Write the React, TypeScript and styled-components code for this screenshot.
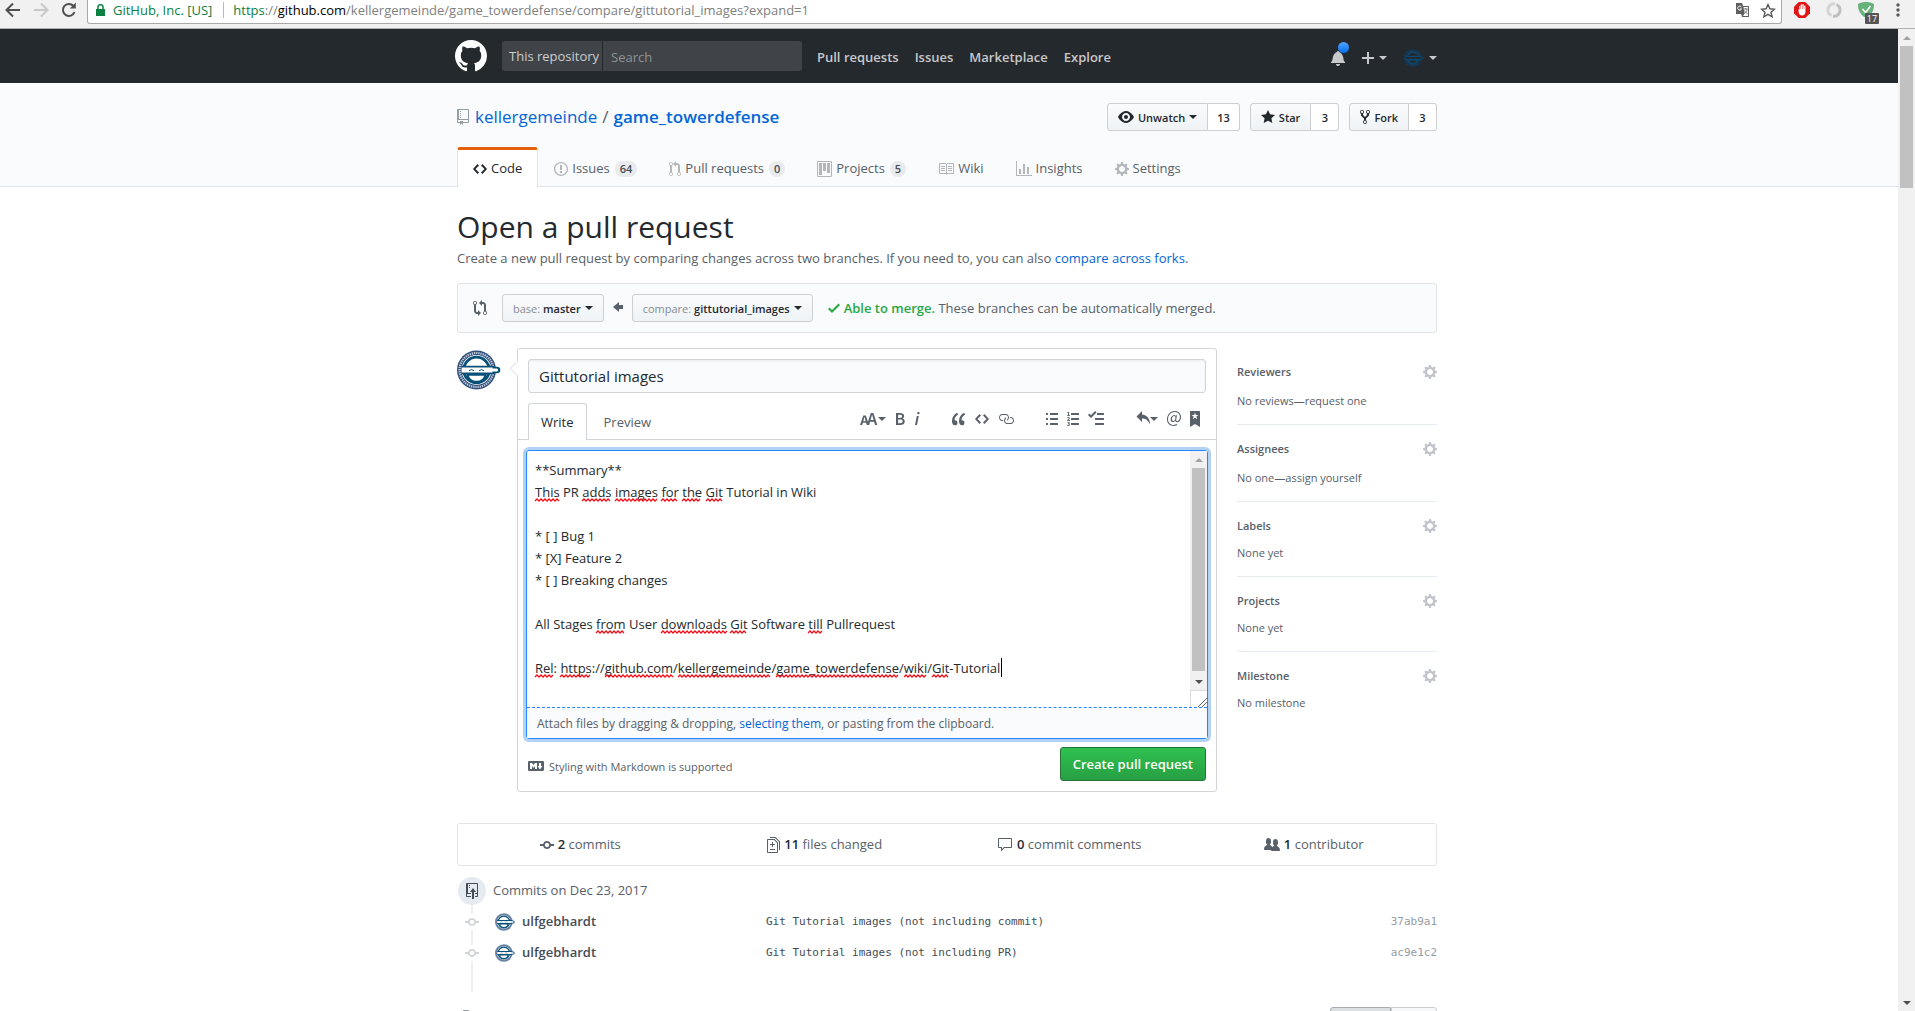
import React, { useLayoutEffect, useRef, useState } from "react";
import styled, { createGlobalStyle, css } from "styled-components";

const sans = `"Open Sans", "Noto Sans", sans-serif`;
const mono = `"DejaVu Sans Mono", "Liberation Mono", monospace`;

const color = {
  text: "#24292e",
  muted: "#586069",
  faint: "#959da5",
  link: "#0366d6",
  line: "#e1e4e8",
  field: "#d1d5da",
  wash: "#fafbfc",
};

const GlobalStyle = createGlobalStyle`
  *, *::before, *::after { box-sizing: border-box; }
  html, body { margin: 0; background: #fff; overflow: hidden; }
  body { font: 13px/21px ${sans}; color: ${color.text}; }
  button, input, textarea { font: inherit; color: inherit; margin: 0; }
  button { cursor: pointer; }
  a { color: ${color.link}; text-decoration: none; }
  h1, h2, h3, p, ul, ol { margin: 0; padding: 0; font-size: inherit; font-weight: 400; }
  ul, ol { list-style: none; }
  svg { display: block; flex: none; }
`;

/* ---------- icons ---------- */

const paths = {
  mark: [16, "M8 0C3.58 0 0 3.58 0 8c0 3.54 2.29 6.53 5.47 7.59.4.07.55-.17.55-.38 0-.19-.01-.82-.01-1.49-2.01.37-2.53-.49-2.69-.94-.09-.23-.48-.94-.82-1.13-.28-.15-.68-.52-.01-.53.63-.01 1.08.58 1.23.82.72 1.21 1.87.87 2.33.66.07-.52.28-.87.51-1.07-1.78-.2-3.64-.89-3.64-3.95 0-.87.31-1.59.82-2.15-.08-.2-.36-1.02.08-2.12 0 0 .67-.21 2.2.82.64-.18 1.32-.27 2-.27.68 0 1.36.09 2 .27 1.53-1.04 2.2-.82 2.2-.82.44 1.1.16 1.92.08 2.12.51.56.82 1.27.82 2.15 0 3.07-1.87 3.75-3.65 3.95.29.25.54.73.54 1.48 0 1.07-.01 1.93-.01 2.2 0 .21.15.46.55.38A8.013 8.013 0 0 0 16 8c0-4.42-3.58-8-8-8z"],
  repo: [12, "M4 9H3V8h1v1zm0-3H3v1h1V6zm0-2H3v1h1V4zm0-2H3v1h1V2zm8-1v12c0 .55-.45 1-1 1H6v2l-1.5-1.5L3 16v-2H1c-.55 0-1-.45-1-1V1c0-.55.45-1 1-1h10c.55 0 1 .45 1 1zm-1 10H1v2h2v-1h3v1h5v-2zm0-10H2v9h9V1z"],
  code: [14, "M9.5 3L8 4.5 11.5 8 8 11.5 9.5 13 14 8 9.5 3zm-5 0L0 8l4.5 5L6 11.5 2.5 8 6 4.5 4.5 3z"],
  issue: [14, "M7 2.3c3.14 0 5.7 2.56 5.7 5.7s-2.56 5.7-5.7 5.7A5.71 5.71 0 0 1 1.3 8c0-3.14 2.56-5.7 5.7-5.7zM7 1C3.14 1 0 4.14 0 8s3.14 7 7 7 7-3.14 7-7-3.14-7-7-7zm1 3H6v5h2V4zm0 6H6v2h2v-2z"],
  pull: [12, "M11 11.28V5c-.03-.78-.34-1.47-.94-2.06C9.46 2.35 8.78 2.03 8 2H7V0L4 3l3 3V4h1c.27.02.48.11.69.31.21.2.3.42.31.69v6.28A1.993 1.993 0 0 0 10 15a1.993 1.993 0 0 0 1-3.72zm-1 2.92c-.66 0-1.2-.55-1.2-1.2 0-.65.55-1.2 1.2-1.2.65 0 1.2.55 1.2 1.2 0 .65-.55 1.2-1.2 1.2zM4 3c0-1.11-.89-2-2-2a1.993 1.993 0 0 0-1 3.72v6.56A1.993 1.993 0 0 0 2 15a1.993 1.993 0 0 0 1-3.72V4.72c.59-.34 1-.98 1-1.72zm-.8 10c0 .66-.55 1.2-1.2 1.2-.65 0-1.2-.55-1.2-1.2 0-.65.55-1.2 1.2-1.2.65 0 1.2.55 1.2 1.2zM2 4.2C1.34 4.2.8 3.65.8 3c0-.65.55-1.2 1.2-1.2.65 0 1.2.55 1.2 1.2 0 .65-.55 1.2-1.2 1.2z"],
  project: [15, "M10 12h3V2h-3v10zm-4-2h3V2H6v8zm-4 4h3V2H2v12zm-1 1h13V1H1v14zM14 0H1a1 1 0 0 0-1 1v14a1 1 0 0 0 1 1h13a1 1 0 0 0 1-1V1a1 1 0 0 0-1-1z"],
  book: [16, "M3 5h4v1H3V5zm0 3h4V7H3v1zm0 2h4V9H3v1zm11-5h-4v1h4V5zm0 2h-4v1h4V7zm0 2h-4v1h4V9zm2-6v9c0 .55-.45 1-1 1H9.5l-1 1-1-1H2c-.55 0-1-.45-1-1V3c0-.55.45-1 1-1h5.5l1 1 1-1H15c.55 0 1 .45 1 1zm-8 .5L7.5 3H2v9h6V3.5zm7-.5H9.5l-.5.5V12h6V3z"],
  graph: [16, "M16 14v1H0V0h1v14h15zM5 13H3V8h2v5zm4 0H7V3h2v10zm4 0h-2V6h2v7z"],
  gear: [14, "M14 8.77v-1.6l-1.94-.64-.45-1.09.88-1.84-1.13-1.13-1.81.91-1.09-.45-.69-1.92h-1.6l-.63 1.94-1.11.45-1.84-.88-1.13 1.13.91 1.81-.45 1.09L0 7.23v1.59l1.94.64.45 1.09-.88 1.84 1.13 1.13 1.81-.91 1.09.45.69 1.92h1.59l.63-1.94 1.11-.45 1.84.88 1.13-1.13-.92-1.81.47-1.09L14 8.75v.02zM7 11c-1.66 0-3-1.34-3-3s1.34-3 3-3 3 1.34 3 3-1.34 3-3 3z"],
  eye: [16, "M8.06 2C3 2 0 8 0 8s3 6 8.06 6C13 14 16 8 16 8s-3-6-7.94-6zM8 12c-2.2 0-4-1.78-4-4 0-2.2 1.8-4 4-4 2.22 0 4 1.8 4 4 0 2.22-1.78 4-4 4zm2-4c0 1.11-.89 2-2 2-1.11 0-2-.89-2-2 0-1.11.89-2 2-2 1.11 0 2 .89 2 2z"],
  star: [14, "M14 6l-4.9-.64L7 1 4.9 5.36 0 6l3.6 3.26L2.67 14 7 11.67 11.33 14l-.93-4.74z"],
  fork: [10, "M8 1a1.993 1.993 0 0 0-1 3.72V6L5 8 3 6V4.72A1.993 1.993 0 0 0 2 1a1.993 1.993 0 0 0-1 3.72V6.5l3 3v1.78A1.993 1.993 0 0 0 5 15a1.993 1.993 0 0 0 1-3.72V9.5l3-3V4.72A1.993 1.993 0 0 0 8 1zM2 4.2C1.34 4.2.8 3.65.8 3c0-.65.55-1.2 1.2-1.2.65 0 1.2.55 1.2 1.2 0 .65-.55 1.2-1.2 1.2zm3 10c-.66 0-1.2-.55-1.2-1.2 0-.65.55-1.2 1.2-1.2.65 0 1.2.55 1.2 1.2 0 .65-.55 1.2-1.2 1.2zm3-10c-.66 0-1.2-.55-1.2-1.2 0-.65.55-1.2 1.2-1.2.65 0 1.2.55 1.2 1.2 0 .65-.55 1.2-1.2 1.2z"],
  compare: [14, "M5 12H4c-.27-.02-.48-.11-.69-.31-.21-.2-.3-.42-.31-.69V4.72A1.993 1.993 0 0 0 2 1a1.993 1.993 0 0 0-1 3.72V11c.03.78.34 1.47.94 2.06.6.59 1.28.91 2.06.94h1v2l3-3-3-3v2zM2 1.8c.66 0 1.2.55 1.2 1.2 0 .65-.55 1.2-1.2 1.2C1.35 4.2.8 3.65.8 3c0-.65.55-1.2 1.2-1.2zm11 9.48V5c-.03-.78-.34-1.47-.94-2.06-.6-.59-1.28-.91-2.06-.94H9V0L6 3l3 3V4h1c.27.02.48.11.69.31.21.2.3.42.31.69v6.28A1.993 1.993 0 0 0 12 15a1.993 1.993 0 0 0 1-3.72zm-1 2.92c-.66 0-1.2-.55-1.2-1.2 0-.65.55-1.2 1.2-1.2.65 0 1.2.55 1.2 1.2 0 .65-.55 1.2-1.2 1.2z"],
  arrow: [10, "M6 3L0 8l6 5v-3h4V6H6z"],
  check: [12, "M12 5l-8 8-4-4 1.5-1.5L4 10l6.5-6.5z"],
  bell: [14, "M14 12v1H0v-1l.73-.58c.77-.77.81-2.55 1.19-4.42C2.69 3.23 6 2 6 2c0-.55.45-1 1-1s1 .45 1 1c0 0 3.39 1.23 4.16 5 .38 1.88.42 3.66 1.19 4.42l.66.58H14zm-7 4c1.11 0 2-.89 2-2H5c0 1.11.89 2 2 2z"],
  plus: [12, "M12 9H7v5H5V9H0V7h5V2h2v5h5z"],
  textSize: [18, "M13.62 9.08L12.1 3.66h-.06l-1.5 5.42h3.08zM5.7 10.13S4.68 6.52 4.53 6.02h-.08l-1.13 4.11H5.7zM17.31 14h-2.25l-.95-3.25h-4.07L9.09 14H6.84l-.69-2.33H2.87L2.17 14H0l3.3-9.59h2.5l2.17 6.34L10.86 2h2.52l3.94 12h-.01z"],
  bold: [10, "M1 2h3.83c2.48 0 4.3.75 4.3 2.95 0 1.14-.63 2.23-1.67 2.61v.06c1.33.3 2.3 1.23 2.3 2.86 0 2.39-1.97 3.52-4.61 3.52H1V2zm3.66 4.95c1.67 0 2.38-.66 2.38-1.69 0-1.17-.78-1.61-2.34-1.61H3.13v3.3h1.53zm.27 5.39c1.77 0 2.75-.64 2.75-1.98 0-1.27-.95-1.81-2.75-1.81h-1.8v3.8h1.8v-.01z"],
  italic: [6, "M2.81 5h1.98L3 14H1l1.81-9zm.36-2.7c0-.7.58-1.3 1.33-1.3.56 0 1.13.38 1.13 1.03 0 .75-.59 1.3-1.33 1.3-.58 0-1.13-.38-1.13-1.03z"],
  quote: [14, "M6.16 3.5C3.73 5.06 2.55 6.67 2.55 9.36c.16-.05.3-.05.44-.05 1.27 0 2.5.86 2.5 2.41 0 1.61-1.03 2.61-2.5 2.61-1.9 0-2.99-1.52-2.99-4.25 0-3.8 1.75-6.53 5.02-8.42L6.16 3.5zm7 0c-2.43 1.56-3.61 3.17-3.61 5.86.16-.05.3-.05.44-.05 1.27 0 2.5.86 2.5 2.41 0 1.61-1.03 2.61-2.5 2.61-1.89 0-2.98-1.52-2.98-4.25 0-3.8 1.75-6.53 5.02-8.42l1.14 1.84h-.01z"],
  link: [16, "M4 9h1v1H4c-1.5 0-3-1.69-3-3.5S2.55 3 4 3h4c1.45 0 3 1.69 3 3.5 0 1.41-.91 2.72-2 3.25V8.59c.58-.45 1-1.27 1-2.09C10 5.22 8.98 4 8 4H4c-.98 0-2 1.22-2 2.5S3 9 4 9zm9-3h-1v1h1c1 0 2 1.22 2 2.5S13.98 12 13 12H9c-.98 0-2-1.22-2-2.5 0-.83.42-1.64 1-2.09V6.25c-1.09.53-2 1.84-2 3.25C6 11.31 7.55 13 9 13h4c1.45 0 3-1.69 3-3.5S14.5 6 13 6z"],
  bullets: [12, "M2 13c0 .59 0 1-.59 1H.59C0 14 0 13.59 0 13c0-.59 0-1 .59-1h.81c.59 0 .59.41.59 1H2zm2.59-9h6.81c.59 0 .59-.41.59-1 0-.59 0-1-.59-1H4.59C4 2 4 2.41 4 3c0 .59 0 1 .59 1zM1.41 7H.59C0 7 0 7.41 0 8c0 .59 0 1 .59 1h.81c.59 0 .59-.41.59-1 0-.59 0-1-.59-1h.01zm0-5H.59C0 2 0 2.41 0 3c0 .59 0 1 .59 1h.81c.59 0 .59-.41.59-1 0-.59 0-1-.59-1h.01zm10 5H4.59C4 7 4 7.41 4 8c0 .59 0 1 .59 1h6.81c.59 0 .59-.41.59-1 0-.59 0-1-.59-1h.01zm0 5H4.59C4 12 4 12.41 4 13c0 .59 0 1 .59 1h6.81c.59 0 .59-.41.59-1 0-.59 0-1-.59-1h.01z"],
  numbers: [12, "M12 13c0 .59 0 1-.59 1H4.59C4 14 4 13.59 4 13c0-.59 0-1 .59-1h6.81c.59 0 .59.41.59 1H12zM4.59 4h6.81c.59 0 .59-.41.59-1 0-.59 0-1-.59-1H4.59C4 2 4 2.41 4 3c0 .59 0 1 .59 1zm6.81 3H4.59C4 7 4 7.41 4 8c0 .59 0 1 .59 1h6.81c.59 0 .59-.41.59-1 0-.59 0-1-.59-1zM2 1h-.72c-.3.19-.58.25-1.03.34V2H1v2.14H.16V5H3v-.86H2V1zm.25 8.13c-.17 0-.45.03-.66.06.53-.56 1.14-1.25 1.14-1.89C2.72 6.52 2.17 6 1.38 6c-.59 0-.97.2-1.38.64l.58.58c.19-.19.38-.38.64-.38.28 0 .48.16.48.52 0 .53-.77 1.2-1.7 2.06V10h3v-.88h-.75v.01zm-.08 3.78v-.03c.44-.19.64-.47.64-.86 0-.7-.56-1.11-1.44-1.11-.48 0-.89.19-1.28.52l.55.64c.25-.2.44-.31.69-.31.27 0 .42.13.42.36 0 .27-.2.44-.86.44v.75c.83 0 .98.17.98.47 0 .25-.23.38-.58.38-.28 0-.56-.14-.81-.38l-.48.66c.3.36.77.56 1.41.56.83 0 1.53-.41 1.53-1.16 0-.5-.31-.81-.77-.94v.01z"],
  tasks: [16, "M15.41 9H7.59C7 9 7 8.59 7 8c0-.59 0-1 .59-1h7.81c.59 0 .59.41.59 1 0 .59 0 1-.59 1h.01zM9.59 4C9 4 9 3.59 9 3c0-.59 0-1 .59-1h5.81c.59 0 .59.41.59 1 0 .59 0 1-.59 1H9.59zM0 3.91l1.41-1.3L3 4.2 7.09 0 8.5 1.41 3 6.91l-3-3zM7.59 12h7.81c.59 0 .59.41.59 1 0 .59 0 1-.59 1H7.59C7 14 7 13.59 7 13c0-.59 0-1 .59-1z"],
  reply: [14, "M6 3.5c3.92.44 8 3.125 8 10-2.312-5.062-4.75-6-8-6V11L.5 5.5 6 0v3.5z"],
  mention: [14, "M6.58 15c1.25 0 2.52-.31 3.56-.94l-.42-.94c-.84.52-1.89.83-3.03.83-3.23 0-5.64-2.08-5.64-5.72 0-4.37 3.23-7.18 6.58-7.18 3.45 0 5.22 2.19 5.22 5.2 0 2.39-1.34 3.86-2.5 3.86-1.05 0-1.36-.73-1.05-2.19l.73-3.75H8.98l-.11.72c-.41-.63-.94-.83-1.56-.83-2.19 0-3.66 2.39-3.66 4.38 0 1.67.94 2.61 2.3 2.61.84 0 1.67-.53 2.3-1.25.11.94.94 1.45 1.98 1.45 1.67 0 3.77-1.67 3.77-5C14 2.61 11.59 0 7.83 0 3.66 0 0 3.33 0 8.33 0 12.71 2.92 15 6.58 15zm-.31-5c-.73 0-1.36-.52-1.36-1.67 0-1.45.94-3.22 2.41-3.22.52 0 .84.2 1.25.83l-.52 3.02c-.63.73-1.25 1.05-1.78 1.05V10z"],
  bookmark: [10, "M9 0H1C.27 0 0 .27 0 1v15l5-3.09L10 16V1c0-.73-.27-1-1-1zm-.78 4.25L6.36 5.61l.72 2.16c.06.22-.02.28-.2.17L5 6.6 3.12 7.94c-.19.11-.25.05-.2-.17l.72-2.16-1.86-1.36c-.17-.16-.14-.23.09-.23l2.3-.03.7-2.16h.25l.7 2.16 2.3.03c.23 0 .27.08.09.23h.01z"],
  markdown: [16, "M14.85 3H1.15C.52 3 0 3.52 0 4.15v7.69C0 12.48.52 13 1.15 13h13.69c.64 0 1.15-.52 1.15-1.15v-7.7C16 3.52 15.48 3 14.85 3zM9 11H7V8L5.5 9.92 4 8v3H2V5h2l1.5 2L7 5h2v6zm2.99.5L9.5 8H11V5h2v3h1.5l-2.51 3.5z"],
  commit: [14, "M10.86 7c-.45-1.72-2-3-3.86-3-1.86 0-3.41 1.28-3.86 3H0v2h3.14c.45 1.72 2 3 3.86 3 1.86 0 3.41-1.28 3.86-3H14V7h-3.14zM7 10.2c-1.22 0-2.2-.98-2.2-2.2 0-1.22.98-2.2 2.2-2.2 1.22 0 2.2.98 2.2 2.2 0 1.22-.98 2.2-2.2 2.2z"],
  diff: [13, "M6 7h2v1H6v2H5V8H3V7h2V5h1v2zm-3 6h5v-1H3v1zM7.5 2L11 5.5V15c0 .55-.45 1-1 1H1c-.55 0-1-.45-1-1V3c0-.55.45-1 1-1h6.5zM10 6L7 3H1v12h9V6zM8.5 0H3v1h5l4 4v8h1V4.5L8.5 0z"],
  comment: [16, "M14 1H2c-.55 0-1 .45-1 1v8c0 .55.45 1 1 1h2v3.5L7.5 11H14c.55 0 1-.45 1-1V2c0-.55-.45-1-1-1zm0 9H7l-2 2v-2H2V2h12v8z"],
  people: [16, "M16 12.999c0 .439-.45 1-1 1H7.995c-.539 0-.994-.447-.995-.999H1c-.54 0-1-.561-1-1 0-2.634 3-4 3-4s.229-.409 0-1c-.841-.621-1.058-.59-1-3 .058-2.419 1.367-3 2.5-3s2.442.58 2.5 3c.058 2.41-.159 2.379-1 3-.229.59 0 1 0 1s1.549.711 2.42 2.088C9.196 9.369 10 8.999 10 8.999s.229-.409 0-1c-.841-.62-1.058-.59-1-3 .058-2.419 1.367-3 2.5-3s2.437.581 2.495 3c.059 2.41-.158 2.38-1 3-.229.59 0 1 0 1s3.005 1.366 3.005 4"],
  push: [12, "M4 3H3V2h1v1zM3 5h1V4H3v1zm4 0L4 9h2v7h2V9h2L7 5zm4-5H1C.45 0 0 .45 0 1v12c0 .55.45 1 1 1h4v-1H1v-2h4v-1H2V1h9.02L11 10H9v1h2v2H9v1h2c.55 0 1-.45 1-1V1c0-.55-.45-1-1-1z"],
} as const;

type IconName = keyof typeof paths;

function Icon({ name, size = 16 }: { name: IconName; size?: number }) {
  const [w, d] = paths[name];
  return (
    <svg width={(w * size) / 16} height={size} viewBox={`0 0 ${w} 16`} fill="currentColor" aria-hidden="true">
      <path fillRule="evenodd" d={d} />
    </svg>
  );
}

const Caret = styled.span`
  border: 4px solid transparent;
  border-top-color: currentColor;
  border-bottom-width: 0;
`;

function Avatar({ size, dark, soft }: { size: number; dark?: boolean; soft?: boolean }) {
  const ink = dark ? "#0a4a74" : "#075079";
  const paper = dark ? "#24292e" : "#fff";
  const ring = dark ? "#123f66" : soft ? "#6b83a3" : "#2f4f79";
  return (
    <svg width={size} height={size} viewBox="0 0 44 44" aria-hidden="true">
      <circle cx="19.5" cy="22" r="19.5" fill={ring} />
      {!soft && <circle cx="19.5" cy="22" r="17" fill="none" stroke={dark ? paper : "#c3cddd"} strokeWidth="2.2" strokeDasharray="1.3 0.9" />}
      <circle cx="19.5" cy="22" r="15" fill={paper} />
      <circle cx="19.5" cy="22" r="12.800" fill="none" stroke={ink} strokeWidth="2.800" />
      <path d="M10.500 26.500h18a9 7.500 0 0 1-18 0z" fill={paper} stroke={ink} strokeWidth="2.400" />
      <path d="M5 17.800h31a2 2 0 0 1 1.600.9h2.400a3.300 3.300 0 0 1 0 6.600h-2.400a2 2 0 0 1-1.600.9H5z" fill={ink} />
      <path d="M5 19.600h30.500v.9h4.200a1.500 1.500 0 0 1 0 3h-4.200v.9H5z" fill={paper} />
      <path d="M12 22.800q2.500-2.400 5 0M22 22.800q2.500-2.400 5 0" fill="none" stroke={ink} strokeWidth="1" />
    </svg>
  );
}

/* ---------- browser frame ---------- */

const Window = styled.div`
  display: flex;
  flex-direction: column;
  height: 100vh;
  overflow: hidden;
`;

const Chrome = styled.div`
  display: flex;
  flex: none;
  height: 29px;
  padding-left: 4px;
  background: #f1f1f1;
  border-bottom: 1px solid #b0b0b0;
  color: #5a5a5a;
`;

const ChromeButtons = styled.div`
  display: flex;
  gap: 10px;
  width: 83px;
  padding-top: 1px;
`;

const ChromeButton = styled.button<{ $dim?: boolean }>`
  display: flex;
  width: 18px;
  height: 18px;
  padding: 0;
  border: 0;
  background: none;
  color: ${(p) => (p.$dim ? "#c8c8c8" : "#505050")};
`;

const Omnibox = styled.div`
  display: flex;
  flex: 1;
  align-items: center;
  height: 24px;
  padding: 0 5px 3px 8px;
  background: #fff;
  border: 1px solid #a9a9a9;
  border-width: 0 1px 1px;
  border-radius: 0 0 3px 3px;
  font-size: 13px;
`;

const Identity = styled.span`
  display: flex;
  align-items: center;
  gap: 8px;
  padding-right: 11px;
  margin-right: 9px;
  border-right: 1px solid #b8b8b8;
  line-height: 16px;
  color: #0b8043;
`;

const Url = styled.span`
  flex: 1;
  color: #808080;
  b { font-weight: 400; color: #000; }
  i { font-style: normal; color: #0b8043; }
`;

const OmniActions = styled.span`
  display: flex;
  gap: 10px;
  color: #5a5a5a;
`;

const Extensions = styled.div`
  display: flex;
  gap: 16px;
  padding: 2px 7px 0 12px;
`;

const Extension = styled.span`
  position: relative;
  width: 16px;
`;

const ExtensionCount = styled.span`
  position: absolute;
  top: 11px;
  left: 7px;
  width: 14px;
  border-radius: 1px;
  background: #555;
  color: #fff;
  font-size: 9px;
  line-height: 11px;
  text-align: center;
`;

function BrowserBar() {
  const stroke = { fill: "none", stroke: "currentColor", strokeWidth: 2 };
  return (
    <Chrome>
      <ChromeButtons>
        <ChromeButton aria-label="Back">
          <svg width="18" height="18" viewBox="0 0 18 18"><path {...stroke} d="M16 9H3M9 2.500L2.500 9 9 15.500" /></svg>
        </ChromeButton>
        <ChromeButton aria-label="Forward" $dim>
          <svg width="18" height="18" viewBox="0 0 18 18"><path {...stroke} d="M2 9h13M9 2.500L15.500 9 9 15.500" /></svg>
        </ChromeButton>
        <ChromeButton aria-label="Reload">
          <svg width="18" height="18" viewBox="0 0 18 18"><path {...stroke} d="M14.500 11.200A6 6 0 1 1 13.300 4.800" /><path fill="currentColor" d="M15.800 1.500v6h-6z" /></svg>
        </ChromeButton>
      </ChromeButtons>
      <Omnibox>
        <Identity>
          <svg width="9" height="12" viewBox="0 0 9 12" aria-hidden="true">
            <path fill="#0b8043" d="M0 5h9v7H0z" /><path fill="none" stroke="#0b8043" strokeWidth="1.500" d="M2 5V3a2.500 2.200 0 0 1 5 0v2" />
          </svg>
          GitHub, Inc. [US]
        </Identity>
        <Url><i>https</i>://<b>github.com</b>/kellergemeinde/game_towerdefense/compare/gittutorial_images?expand=1</Url>
        <OmniActions>
          <svg width="15" height="15" viewBox="0 0 15 15" aria-hidden="true">
            <path fill="#5f5f5f" d="M1 0h6l1.200 3H14v11H7l-.8-3H1z" /><path fill="#fff" d="M8.500 4H13v9H8l1.500-2.200z" />
            <path fill="none" stroke="#fff" d="M6.400 4A2 2 0 1 0 6.500 6H4.800" /><path fill="none" stroke="#777" d="M8.700 6h4M10.700 5v1M9 10.500c2-1 3-2.500 3-4.500M9.500 7.500c1 2 2 2.500 3 3" />
          </svg>
          <svg width="16" height="15" viewBox="0 0 16 15" aria-hidden="true"><path {...stroke} strokeWidth="1.400" d="M8 1.500l1.900 4.300 4.600.4-3.500 3 1.100 4.600L8 11.300l-4.100 2.500L5 9.200l-3.500-3 4.600-.4z" /></svg>
        </OmniActions>
      </Omnibox>
      <Extensions>
        <Extension>
          <svg width="16" height="16" viewBox="0 0 16 16" aria-hidden="true">
            <path fill="#e01515" d="M4.700 0h6.600L16 4.700v6.600L11.300 16H4.700L0 11.300V4.700z" />
            <path fill="#fff" d="M5.200 4.200c.8-.4 1 .3 1 .6V7h.4V2.900c.2-.9 1.300-.7 1.400 0V7h.4V2.500c.3-.8 1.300-.6 1.400.1V7.200h.4V4c.4-.7 1.300-.5 1.300.2v5.600c0 2-1.200 3.700-3.300 3.700-1.800 0-2.700-1-3.300-2.300L4.400 8c.2-.6.8-.4 1.100 0z" />
          </svg>
        </Extension>
        <Extension>
          <svg width="16" height="16" viewBox="0 0 16 16" fill="none" strokeWidth="3" aria-hidden="true">
            <path stroke="#d4d4d4" d="M9 2C4.500 1 1.500 5 2 9c.4 2.400 2 3.800 3.600 4.500" /><path stroke="#c0c0c0" d="M7 14c4.500 1 7.500-3 7-7-.4-2.400-2-3.800-3.600-4.500" />
          </svg>
        </Extension>
        <Extension>
          <svg width="16" height="16" viewBox="0 0 16 16" aria-hidden="true">
            <path fill="#67b279" d="M8 0c2.500 0 5.500.6 8 2 0 4-.5 10-8 14C.500 12 0 6 0 2 2.500.6 5.500 0 8 0z" /><path fill="none" stroke="#fff" strokeWidth="1.500" d="M4.500 7l3 3.500L12.500 4" />
          </svg>
          <ExtensionCount>17</ExtensionCount>
        </Extension>
        <ChromeButton aria-label="Menu">
          <svg width="16" height="16" viewBox="0 0 16 16" fill="#5a5a5a"><circle cx="8" cy="3" r="1.700" /><circle cx="8" cy="8" r="1.700" /><circle cx="8" cy="13" r="1.700" /></svg>
        </ChromeButton>
      </Extensions>
    </Chrome>
  );
}

/* ---------- scroll bars ---------- */

const Track = styled.div`
  display: flex;
  flex: none;
  flex-direction: column;
  width: 17px;
  padding: 0 2px;
  background: #f1f1f1;
`;

const TrackArrow = styled.span<{ $down?: boolean; $color: string }>`
  display: grid;
  flex: none;
  place-content: center;
  height: 17px;
  &::before {
    content: "";
    border: 4px solid transparent;
    ${(p) => (p.$down ? css`border-bottom-width: 0; border-top-color: ${p.$color};` : css`border-top-width: 0; border-bottom-color: ${p.$color};`)}
  }
`;

const Thumb = styled.span<{ $grow: number }>`
  flex: ${(p) => p.$grow} 0 0;
  background: #c1c1c1;
`;

const TrackRest = styled.span<{ $grow: number }>`
  flex: ${(p) => p.$grow} 0 0;
`;

function ScrollBar({ shown }: { shown: number }) {
  return (
    <Track aria-hidden="true">
      <TrackArrow $color="#a3a3a3" />
      <Thumb $grow={shown} />
      <TrackRest $grow={100 - shown} />
      <TrackArrow $down $color="#505050" />
    </Track>
  );
}

/* ---------- page frame ---------- */

const Viewport = styled.div`
  display: flex;
  flex: 1;
  min-height: 0;
`;

const Page = styled.div`
  flex: 1;
  min-width: 0;
  overflow: hidden;
`;

const Container = styled.div`
  max-width: 984px;
  margin: 0 auto;
  padding-right: 4px;
`;

/* ---------- site header ---------- */

const TopBar = styled.header`
  background: #24292e;
  color: rgba(255, 255, 255, 0.75);
`;

const TopRow = styled(Container)`
  display: flex;
  align-items: center;
  height: 54px;
`;

const Logo = styled.a`
  margin: 0 15px 0 -2px;
  color: #fff;
`;

const SearchBox = styled.form`
  display: flex;
  width: 300px;
  height: 30px;
  margin-right: 15px;
  border-radius: 3px;
  background: #404448;
`;

const SearchScope = styled.label`
  flex: none;
  width: 101px;
  padding: 0 7px;
  border-right: 1px solid #24292e;
  line-height: 31px;
  white-space: nowrap;
  color: #cdcecf;
`;

const SearchInput = styled.input`
  flex: 1;
  min-width: 0;
  padding: 2px 8px 0;
  border: 0;
  background: none;
  &::placeholder { color: #8f9295; opacity: 1; }
`;

const TopNav = styled.nav`
  display: flex;
  flex: 1;
  gap: 16px;
  padding-top: 2px;
  a { color: inherit; font-weight: 600; }
`;

const TopTools = styled.div`
  display: flex;
  align-items: center;
  gap: 17px;
  padding-top: 4px;
`;

const ToolButton = styled.button`
  position: relative;
  display: flex;
  align-items: center;
  gap: 5px;
  padding: 0;
  border: 0;
  background: none;
`;

const Dot = styled.span`
  position: absolute;
  top: -8px;
  right: -4px;
  width: 11px;
  height: 11px;
  border-radius: 50%;
  background: linear-gradient(#54a3ff, #006eed);
`;

/* ---------- repository header ---------- */

const RepoHead = styled.div`
  padding-top: 20px;
  background: ${color.wash};
  border-bottom: 1px solid ${color.line};
`;

const RepoRow = styled.div`
  display: flex;
  align-items: center;
  gap: 6px;
  height: 28px;
  margin-bottom: 16px;
`;

const RepoTitle = styled.h1`
  display: flex;
  flex: 1;
  gap: 5px;
  font-size: 17px;
  line-height: 26px;
  color: ${color.muted};
  a:last-child { font-weight: 600; }
`;

const RepoMark = styled.span`
  color: ${color.faint};
`;

const RepoActions = styled.ul`
  display: flex;
  gap: 10px;
`;

const buttonFace = css`
  background: linear-gradient(#fafbfc, #eff3f6);
  border: 1px solid #cdcfd1;
  border-radius: 3px;
`;

const SmallButton = styled.button<{ $joined?: boolean }>`
  ${buttonFace}
  display: flex;
  align-items: center;
  gap: 4px;
  height: 28px;
  padding: 0 10px;
  font-size: 11px;
  font-weight: 600;
  white-space: nowrap;
  ${(p) => p.$joined && css`border-radius: 3px 0 0 3px;`}
`;

const ActionItem = styled.li`
  display: flex;
`;

const SocialCount = styled.a`
  display: grid;
  place-items: center;
  min-width: 28px;
  padding: 0 9px;
  background: #fff;
  border: 1px solid #cdcfd1;
  border-left: 0;
  border-radius: 0 3px 3px 0;
  color: ${color.text};
  font-size: 11px;
  font-weight: 600;
`;

const Tabs = styled.nav`
  display: flex;
  margin-bottom: -1px;
`;

const Tab = styled.a<{ $on?: boolean }>`
  display: flex;
  align-items: center;
  gap: 4px;
  height: 40px;
  padding: 0 15px;
  border: 1px solid transparent;
  border-top: 3px solid transparent;
  border-bottom: 0;
  border-radius: 3px 3px 0 0;
  color: ${color.muted};
  white-space: nowrap;
  svg { color: ${(p) => (p.$on ? color.text : "#b4b7ba")}; }
  ${(p) =>
    p.$on &&
    css`
      background: #fff;
      border-color: #e36209 ${color.line} transparent;
      color: ${color.text};
    `}
`;

const Counter = styled.span`
  margin-left: 1px;
  padding: 0 5px;
  border-radius: 20px;
  background: #e9eaeb;
  color: #444d56;
  font-size: 11px;
  font-weight: 600;
  line-height: 16px;
`;

/* ---------- pull request form ---------- */

const PageTitle = styled.h2`
  padding-top: 19px;
  font-size: 30px;
  line-height: 42px;
`;

const Lead = styled.p`
  margin-bottom: 15px;
  line-height: 20px;
  color: ${color.muted};
`;

const RangeBox = styled.div`
  display: flex;
  align-items: center;
  height: 50px;
  margin-bottom: 15px;
  padding: 0 15px;
  background: ${color.wash};
  border: 1px solid ${color.line};
  border-radius: 3px;
  color: ${color.muted};
`;

const RangeItem = styled.div`
  display: flex;
  align-items: center;
  gap: 4px;
  margin-right: 15px;
  em { font-style: normal; font-weight: 400; color: #868c93; }
  strong { font-weight: 600; color: #28a745; }
`;

const MasterItem = styled(RangeItem)`
  margin-right: 9px;
  button { color: ${color.text}; }
`;

const ArrowItem = styled(RangeItem)`
  margin-right: 9px;
  padding-bottom: 2px;
`;

const CompareItem = styled(RangeItem)`
  button { color: ${color.text}; }
`;

const MergeItem = styled(RangeItem)`
  > svg { color: #28a745; }
`;

const Columns = styled.div`
  display: grid;
  grid-template-columns: 44px minmax(0, 1fr) 200px;
  align-items: start;
  margin-bottom: 31px;
`;

const FormBox = styled.form`
  position: relative;
  margin: 0 20px 0 16px;
  background: #fff;
  border: 1px solid ${color.field};
  border-radius: 3px;
  &::before {
    content: "";
    position: absolute;
    top: 14px;
    left: -6px;
    width: 11px;
    height: 11px;
    background: #fff;
    border: solid ${color.line};
    border-width: 0 0 1px 1px;
    transform: rotate(45deg);
  }
`;

const TitleInput = styled.input`
  display: block;
  width: calc(100% - 20px);
  height: 34px;
  margin: 10px;
  padding: 0 10px;
  background: ${color.wash};
  border: 1px solid ${color.field};
  border-radius: 3px;
  box-shadow: inset 0 1px 2px rgba(27, 31, 35, 0.075);
  font-size: 15px;
`;

const EditorHead = styled.div`
  display: flex;
  gap: 4px;
  height: 37px;
  padding: 0 10px;
  border-bottom: 1px solid ${color.field};
`;

const EditorTab = styled.button<{ $on?: boolean }>`
  height: 37px;
  padding: 0 12px;
  background: none;
  border: 1px solid transparent;
  border-bottom: 0;
  border-radius: 3px 3px 0 0;
  color: ${color.muted};
  ${(p) => p.$on && css`background: #fff; border-color: ${color.field}; color: ${color.text};`}
`;

const Toolbar = styled.div`
  display: flex;
  flex: 1;
  justify-content: flex-end;
  gap: 32px;
  padding: 8px 6px 0 0;
`;

const ToolGroup = styled.div`
  display: flex;
  align-items: flex-start;
  gap: 9px;
`;

const Tool = styled.button`
  display: flex;
  align-items: center;
  padding: 0;
  border: 0;
  background: none;
  color: ${color.muted};
`;

const Editor = styled.div`
  margin: 10px 8px 8px;
  border: 1px solid #2188ff;
  border-radius: 3px;
  box-shadow: 0 0 0 3px rgba(3, 102, 214, 0.3);
`;

const WritePane = styled.div`
  display: flex;
  height: 257px;
  border-bottom: 1px dashed #2188ff;
`;

const Sheet = styled.div`
  position: relative;
  flex: 1;
`;

const Body = styled.textarea`
  display: block;
  width: 100%;
  height: 100%;
  padding: 8px;
  border: 0;
  outline: 0;
  resize: none;
  overflow: hidden;
  background: none;
  line-height: 22px;
`;

const Marks = styled.svg`
  position: absolute;
  inset: 0;
  width: 100%;
  height: 100%;
  pointer-events: none;
`;

const SideTrack = styled.div`
  display: flex;
  flex-direction: column;
  ${Track} { flex: 1; }
`;

const Grip = styled.div`
  display: grid;
  place-content: end;
  height: 17px;
  border: 1px solid #dcdcdc;
  border-width: 1px 0 0 1px;
`;

const DropHint = styled.p`
  padding: 6px 10px 4px;
  background: ${color.wash};
  line-height: 20px;
  color: ${color.muted};
  font-size: 12px;
`;

const FormFoot = styled.div`
  display: flex;
  align-items: center;
  justify-content: space-between;
  height: 34px;
  margin: 8px 10px 10px;
`;

const MarkdownHint = styled.a`
  display: flex;
  align-items: center;
  gap: 5px;
  padding-top: 4px;
  color: ${color.muted};
  font-size: 11px;
`;

const CreateButton = styled.button`
  height: 34px;
  padding: 0 12px;
  background: linear-gradient(#2fc150, #279f43);
  border: 1px solid #26733a;
  border-radius: 3px;
  color: #fff;
  font-weight: 600;
`;

/* ---------- sidebar ---------- */

const Sidebar = styled.aside`
  section + section { border-top: 1px solid #e6ebf1; }
`;

const SideBlock = styled.section<{ $tall?: boolean }>`
  padding: 15px 0 14px;
  font-size: 11px;
  line-height: 18px;
  color: ${color.muted};
  h3 { margin-bottom: ${(p) => (p.$tall ? 11 : 9)}px; }
`;

const SideHead = styled.h3`
  display: flex;
  align-items: center;
  justify-content: space-between;
  font-weight: 600;
  svg { color: #c0c5cb; }
`;

/* ---------- summary and commits ---------- */

const Summary = styled.ul`
  display: grid;
  grid-template-columns: repeat(4, 1fr);
  height: 43px;
  margin-bottom: 9px;
  border: 1px solid ${color.line};
  border-radius: 3px;
`;

const SummaryItem = styled.li`
  display: flex;
  align-items: center;
  justify-content: center;
  gap: 4px;
  color: ${color.muted};
  b { font-weight: 600; color: ${color.text}; }
`;

const Timeline = styled.div`
  position: relative;
  height: 117px;
  margin-bottom: 15px;
  &::before {
    content: "";
    position: absolute;
    top: 30px;
    bottom: 0;
    left: 14px;
    width: 2px;
    background: #eeeff0;
  }
`;

const DayRow = styled.div`
  display: flex;
  align-items: center;
  gap: 7px;
  height: 31px;
  padding-left: 1px;
  color: ${color.muted};
`;

const DayBadge = styled.span`
  display: grid;
  place-items: center;
  width: 28px;
  height: 28px;
  border-radius: 50%;
  background: #e6ebf1;
  color: #444d56;
`;

const Commit = styled.li`
  position: relative;
  display: grid;
  grid-template-columns: 38px 27px 244px 1fr auto;
  align-items: center;
  height: 31px;
`;

const Node = styled.span`
  display: grid;
  place-items: center;
  width: 14px;
  margin-left: 8px;
  background: #fff;
  color: #d1d5da;
`;

const Author = styled.a`
  font-weight: 600;
  color: #444d56;
`;

const Message = styled.a`
  font: 11px/20px ${mono};
  color: #444d56;
`;

const Sha = styled(Message)`
  color: ${color.faint};
`;

const DiffBar = styled.div`
  display: flex;
  align-items: flex-start;
  justify-content: space-between;
  padding-left: 3px;
  color: ${color.faint};
  > svg { margin-top: 3px; }
`;

const ViewSwitch = styled.div`
  display: flex;
`;

const ViewButton = styled.button<{ $on?: boolean }>`
  width: ${(p) => (p.$on ? 61 : 46)}px;
  height: 28px;
  border: 1px solid #cdcfd1;
  border-radius: ${(p) => (p.$on ? "3px 0 0 3px" : "0 3px 3px 0")};
  background: ${(p) => (p.$on ? "#dcdfe2" : "#f6f8fa")};
  ${(p) => p.$on && css`border-color: #a8acb0;`}
`;

/* ---------- description editor ---------- */

const description = [
  "**Summary**",
  "This PR adds images for the Git Tutorial in Wiki",
  "",
  "* [ ] Bug 1",
  "* [X] Feature 2",
  "* [ ] Breaking changes",
  "",
  "All Stages from User downloads Git Software till Pullrequest",
  "",
  "Rel: https://github.com/kellergemeinde/game_towerdefense/wiki/Git-Tutorial",
];

const misspelled: [number, string[]][] = [
  [1, ["This", "adds", "images", "for", "the", "Git"]],
  [7, ["from", "downloads", "Git", "till"]],
  [9, ["Rel", "https", "github.com", "kellergemeinde", "game_towerdefense", "wiki", "Git"]],
];

const LINE = 22;
const PAD = 8;

function wave(x: number, y: number, w: number) {
  let d = `M${Math.round(x)} ${y}`;
  for (let i = 0; i < Math.floor(w / 2); i++) d += `l2 ${i % 2 ? 2 : -2}`;
  return d;
}

function DescriptionSheet() {
  const field = useRef<HTMLTextAreaElement>(null);
  const [value, setValue] = useState(description.join("\n") + "\n");
  const [marks, setMarks] = useState<{ waves: string[]; caret: [number, number] } | null>(null);

  useLayoutEffect(() => {
    const ctx = document.createElement("canvas").getContext("2d");
    if (!ctx || !field.current) return;
    const s = getComputedStyle(field.current);
    ctx.font = `${s.fontSize} ${s.fontFamily}`;
    const lines = value.split("\n");
    const waves: string[] = [];
    for (const [row, words] of misspelled) {
      const line = lines[row] ?? "";
      let from = 0;
      for (const word of words) {
        const at = line.indexOf(word, from);
        if (at < 0) continue;
        from = at + word.length;
        waves.push(wave(PAD + ctx.measureText(line.slice(0, at)).width, PAD + row * LINE + 20, ctx.measureText(word).width));
      }
    }
    const last = description.length - 1;
    setMarks({ waves, caret: [PAD + Math.ceil(ctx.measureText(lines[last] ?? "").width), PAD + last * LINE] });
  }, [value]);

  return (
    <Sheet>
      <Body ref={field} aria-label="Description" spellCheck={false} value={value} onChange={(e) => setValue(e.target.value)} />
      {marks && (
        <Marks aria-hidden="true">
          <path d={marks.waves.join("")} fill="none" stroke="#f0101a" strokeWidth="1.3" />
          <rect x={marks.caret[0]} y={marks.caret[1] + 1} width="1" height="19" fill="#000" />
        </Marks>
      )}
    </Sheet>
  );
}

const repoTabs: { icon: IconName; label: string; count?: number }[] = [
  { icon: "code", label: "Code" },
  { icon: "issue", label: "Issues", count: 64 },
  { icon: "pull", label: "Pull requests", count: 0 },
  { icon: "project", label: "Projects", count: 5 },
  { icon: "book", label: "Wiki" },
  { icon: "graph", label: "Insights" },
  { icon: "gear", label: "Settings" },
];

const tools: { icon: IconName; label: string; menu?: boolean }[][] = [
  [{ icon: "textSize", label: "Heading", menu: true }, { icon: "bold", label: "Bold" }, { icon: "italic", label: "Italic" }],
  [{ icon: "quote", label: "Quote" }, { icon: "code", label: "Code" }, { icon: "link", label: "Link" }],
  [{ icon: "bullets", label: "Bulleted list" }, { icon: "numbers", label: "Numbered list" }, { icon: "tasks", label: "Task list" }],
  [{ icon: "reply", label: "Saved reply", menu: true }, { icon: "mention", label: "Mention" }, { icon: "bookmark", label: "Reference" }],
];

const sideBlocks = [
  { title: "Reviewers", text: "No reviews—request one", tall: true },
  { title: "Assignees", text: "No one—assign yourself", tall: true },
  { title: "Labels", text: "None yet" },
  { title: "Projects", text: "None yet" },
  { title: "Milestone", text: "No milestone" },
];

const summary: { icon: IconName; count: number; label: string }[] = [
  { icon: "commit", count: 2, label: "commits" },
  { icon: "diff", count: 11, label: "files changed" },
  { icon: "comment", count: 0, label: "commit comments" },
  { icon: "people", count: 1, label: "contributor" },
];

const commits = [
  { message: "Git Tutorial images (not including commit)", sha: "37ab9a1" },
  { message: "Git Tutorial images (not including PR)", sha: "ac9e1c2" },
];

export default function App() {
  const [title, setTitle] = useState("Gittutorial images");
  return (
    <Window>
      <GlobalStyle />
      <BrowserBar />
      <Viewport>
        <Page>
          <TopBar>
            <TopRow>
              <Logo href="#" aria-label="Homepage"><Icon name="mark" size={32} /></Logo>
              <SearchBox>
                <SearchScope htmlFor="search">This repository</SearchScope>
                <SearchInput id="search" placeholder="Search" />
              </SearchBox>
              <TopNav>
                <a href="#">Pull requests</a>
                <a href="#">Issues</a>
                <a href="#">Marketplace</a>
                <a href="#">Explore</a>
              </TopNav>
              <TopTools>
                <ToolButton aria-label="Notifications"><Icon name="bell" /><Dot /></ToolButton>
                <ToolButton aria-label="Create new"><Icon name="plus" /><Caret /></ToolButton>
                <ToolButton aria-label="Profile"><Avatar size={20} dark /><Caret /></ToolButton>
              </TopTools>
            </TopRow>
          </TopBar>

          <RepoHead>
            <Container>
              <RepoRow>
                <RepoMark><Icon name="repo" /></RepoMark>
                <RepoTitle><a href="#">kellergemeinde</a>/<a href="#">game_towerdefense</a></RepoTitle>
                <RepoActions>
                  <ActionItem><SmallButton $joined><Icon name="eye" />Unwatch<Caret /></SmallButton><SocialCount href="#">13</SocialCount></ActionItem>
                  <ActionItem><SmallButton $joined><Icon name="star" />Star</SmallButton><SocialCount href="#">3</SocialCount></ActionItem>
                  <ActionItem><SmallButton $joined><Icon name="fork" />Fork</SmallButton><SocialCount href="#">3</SocialCount></ActionItem>
                </RepoActions>
              </RepoRow>
              <Tabs>
                {repoTabs.map((t, i) => (
                  <Tab key={t.label} href="#" $on={i === 0}>
                    <Icon name={t.icon} />{t.label}{t.count !== undefined && <Counter>{t.count}</Counter>}
                  </Tab>
                ))}
              </Tabs>
            </Container>
          </RepoHead>

          <Container as="main">
            <PageTitle>Open a pull request</PageTitle>
            <Lead>
              Create a new pull request by comparing changes across two branches. If you need to, you can also <a href="#">compare across forks</a>.
            </Lead>

            <RangeBox>
              <RangeItem><Icon name="compare" /></RangeItem>
              <MasterItem><SmallButton><span><em>base:</em> master</span><Caret /></SmallButton></MasterItem>
              <ArrowItem><Icon name="arrow" /></ArrowItem>
              <CompareItem><SmallButton><span><em>compare:</em> gittutorial_images</span><Caret /></SmallButton></CompareItem>
              <MergeItem><Icon name="check" /><span><strong>Able to merge.</strong> These branches can be automatically merged.</span></MergeItem>
            </RangeBox>

            <Columns>
              <Avatar size={44} />
              <FormBox>
                <TitleInput aria-label="Title" value={title} onChange={(e) => setTitle(e.target.value)} />
                <EditorHead>
                  <EditorTab type="button" $on>Write</EditorTab>
                  <EditorTab type="button">Preview</EditorTab>
                  <Toolbar>
                    {tools.map((group, i) => (
                      <ToolGroup key={i}>
                        {group.map((t) => (
                          <Tool key={t.label} type="button" aria-label={t.label}><Icon name={t.icon} />{t.menu && <Caret />}</Tool>
                        ))}
                      </ToolGroup>
                    ))}
                  </Toolbar>
                </EditorHead>
                <Editor>
                  <WritePane>
                    <DescriptionSheet />
                    <SideTrack>
                      <ScrollBar shown={99} />
                      <Grip>
                        <svg width="9" height="9" viewBox="0 0 9 9" stroke="#666" aria-hidden="true"><path d="M0 9L9 0M4 9l5-5" /></svg>
                      </Grip>
                    </SideTrack>
                  </WritePane>
                  <DropHint>Attach files by dragging &amp; dropping, <a href="#">selecting them</a>, or pasting from the clipboard.</DropHint>
                </Editor>
                <FormFoot>
                  <MarkdownHint href="#"><Icon name="markdown" />Styling with Markdown is supported</MarkdownHint>
                  <CreateButton type="button">Create pull request</CreateButton>
                </FormFoot>
              </FormBox>
              <Sidebar>
                {sideBlocks.map((b) => (
                  <SideBlock key={b.title} $tall={b.tall}>
                    <SideHead>{b.title}<Icon name="gear" /></SideHead>
                    <p>{b.text}</p>
                  </SideBlock>
                ))}
              </Sidebar>
            </Columns>

            <Summary>
              {summary.map((s) => (
                <SummaryItem key={s.label}><Icon name={s.icon} /><span><b>{s.count}</b> {s.label}</span></SummaryItem>
              ))}
            </Summary>

            <Timeline>
              <DayRow><DayBadge><Icon name="push" /></DayBadge>Commits on Dec 23, 2017</DayRow>
              <ul>
                {commits.map((c) => (
                  <Commit key={c.sha}>
                    <Node><Icon name="commit" /></Node>
                    <Avatar size={20} soft />
                    <Author href="#">ulfgebhardt</Author>
                    <Message href="#">{c.message}</Message>
                    <Sha href="#">{c.sha}</Sha>
                  </Commit>
                ))}
              </ul>
            </Timeline>

            <DiffBar>
              <Icon name="diff" />
              <ViewSwitch>
                <ViewButton $on aria-label="Unified" />
                <ViewButton aria-label="Split" />
              </ViewSwitch>
            </DiffBar>
          </Container>
        </Page>
        <ScrollBar shown={15} />
      </Viewport>
    </Window>
  );
}
